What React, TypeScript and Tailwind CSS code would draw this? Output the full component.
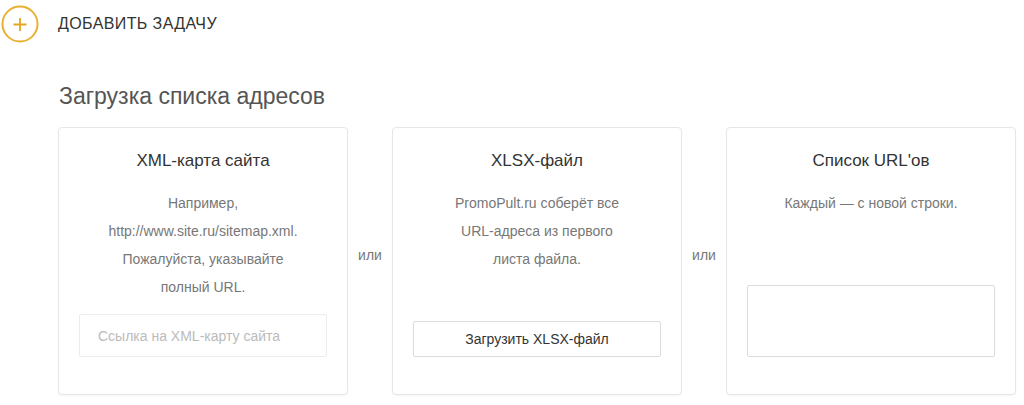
const CARD = 'flex h-[268px] w-[290px] shrink-0 flex-col rounded-[4px] border border-[#e6e6e6] bg-white px-5 pb-[37px] pt-[22px] shadow-[0_1px_2px_rgba(0,0,0,0.04)]'

function Or() {
  return (
    <div className="flex w-[44px] shrink-0 items-center justify-center pb-[12px] text-[14px] text-[#777]">
      или
    </div>
  )
}

function CardTitle({ children }: { children: React.ReactNode }) {
  return <h3 className="text-center text-[17px] leading-[22px] text-[#333]">{children}</h3>
}

function CardText({ lines }: { lines: string[] }) {
  return (
    <div className="mt-[17px] text-center text-[14px] leading-[28px] text-[#777]">
      {lines.map((line) => (
        <p key={line}>{line}</p>
      ))}
    </div>
  )
}

export default function App() {
  return (
    <div className="h-[405px] w-[1024px] overflow-hidden bg-white font-['Liberation_Sans',Arial,sans-serif]">
      <div className="flex h-[46px] items-center gap-[19px] pl-[1px] pt-[1px]">
        <svg width="38" height="38" viewBox="0 0 38 38" fill="none" className="shrink-0">
          <circle cx="19" cy="19" r="17.5" stroke="#e9b134" strokeWidth="2" />
          <path d="M12.5 19.5h13M19 13v13" stroke="#e3a621" strokeWidth="1.8" />
        </svg>
        <span className="text-[16px] tracking-[0.4px] text-[#333]">ДОБАВИТЬ ЗАДАЧУ</span>
      </div>

      <h2 className="ml-[59px] mt-[37px] text-[23px] font-light leading-[26px] text-[#555]">
        Загрузка списка адресов
      </h2>

      <div className="ml-[58px] mt-[18px] flex">
        <div className={CARD}>
          <CardTitle>XML-карта сайта</CardTitle>
          <CardText
            lines={['Например,', 'http://www.site.ru/sitemap.xml.', 'Пожалуйста, указывайте', 'полный URL.']}
          />
          <input
            placeholder="Ссылка на XML-карту сайта"
            className="mt-auto h-[43px] w-full rounded-[2px] border border-[#ececec] px-[18px] text-[14px] text-[#333] outline-none placeholder:text-[#bbb]"
          />
        </div>
        <Or />
        <div className={CARD}>
          <CardTitle>XLSX-файл</CardTitle>
          <CardText lines={['PromoPult.ru соберёт все', 'URL-адреса из первого', 'листа файла.']} />
          <button
            type="button"
            className="mt-auto h-[36px] w-full rounded-[2px] border border-[#dcdcdc] bg-white text-[14px] text-[#333]"
          >
            Загрузить XLSX-файл
          </button>
        </div>
        <Or />
        <div className={CARD}>
          <CardTitle>Список URL'ов</CardTitle>
          <CardText lines={['Каждый — с новой строки.']} />
          <textarea className="mt-auto h-[72px] w-full resize-none rounded-[2px] border border-[#dcdcdc] outline-none" />
        </div>
      </div>
    </div>
  )
}
